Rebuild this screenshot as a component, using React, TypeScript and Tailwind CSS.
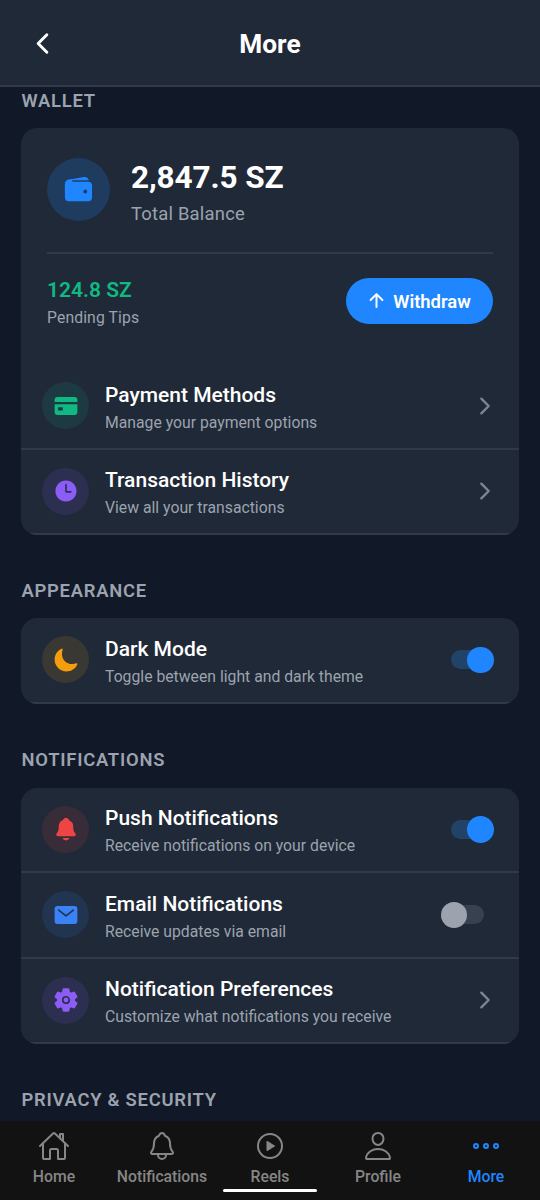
import React, { useState } from "react";
import {
    IoArrowUp,
    IoChevronBack,
    IoChevronForward,
    IoEllipsisHorizontalOutline,
    IoHomeOutline,
    IoMail,
    IoMoon,
    IoNotifications,
    IoNotificationsOutline,
    IoPersonOutline,
    IoPlayCircleOutline,
    IoSettings,
    IoTime,
    IoWallet,
} from "react-icons/io5";

const CardIcon = ({ size }: { size?: number }) => (
    <svg width={size} height={size} viewBox="0 0 512 512" fill="currentColor" aria-hidden="true">
        <path d="M88 80h336a56 56 0 0 1 56 56v40H32v-40a56 56 0 0 1 56-56z" />
        <path
            fillRule="evenodd"
            d="M32 220h448v156a56 56 0 0 1-56 56H88a56 56 0 0 1-56-56zM100 280v64h92v-64z"
        />
    </svg>
);

const SectionTitle = ({ children }: { children: React.ReactNode }) => (
    <h2 className="pl-[21.5px] text-[18.4px] leading-[22px] font-semibold tracking-[0.75px] text-[#9ca3af]">
        {children}
    </h2>
);

const Card = ({ children }: { children: React.ReactNode }) => (
    <div className="mx-[21px] overflow-hidden rounded-[16px] bg-[#1f2937]">{children}</div>
);

const Switch = ({ on, onChange }: { on: boolean; onChange: () => void }) => (
    <button
        type="button"
        role="switch"
        aria-checked={on}
        onClick={onChange}
        className={`relative mr-[4.5px] flex h-[27px] w-[53px] items-center ${on ? "justify-end" : "justify-start"}`}
    >
        <span
            className={`absolute top-[4px] h-[19px] rounded-full ${
                on ? "left-[10px] w-[39px] bg-[#204367]" : "left-[4px] w-[39px] bg-[#374151]"
            }`}
        />
        <span className={`relative size-[26.5px] rounded-full ${on ? "bg-[#2086ff]" : "bg-[#9ca3af]"}`} />
    </button>
);

type RowProps = {
    icon: React.ComponentType<{ size?: number }>;
    color: string;
    title: string;
    subtitle: string;
    children?: React.ReactNode;
};

const Row = ({ icon: Icon, color, title, subtitle, children }: RowProps) => (
    <div className="flex h-[85.5px] items-center border-b-2 border-[#303a49] px-[21px]">
        <div className={`flex size-[47px] items-center justify-center rounded-full ${color}`}>
            <Icon size={26} />
        </div>
        <div className="ml-4 flex-1 pt-[6px]">
            <div className="text-[21px] leading-[25px] font-medium text-white">{title}</div>
            <div className="mt-[3px] text-[15.75px] leading-[24px] text-[#9ca3af]">{subtitle}</div>
        </div>
        {children ?? <IoChevronForward size={26} className="text-[#7d8591]" />}
    </div>
);

const tabs = [
    { label: "Home", icon: IoHomeOutline },
    { label: "Notifications", icon: IoNotificationsOutline },
    { label: "Reels", icon: IoPlayCircleOutline },
    { label: "Profile", icon: IoPersonOutline },
    { label: "More", icon: IoEllipsisHorizontalOutline },
];

const App = () => {
    const [darkMode, setDarkMode] = useState(true);
    const [push, setPush] = useState(true);
    const [email, setEmail] = useState(false);

    return (
        <div className="flex h-[1200px] w-[540px] flex-col overflow-hidden bg-[#111827] font-['Roboto',sans-serif]">
            {/* Header */}
            <header className="flex h-[87px] shrink-0 items-center border-b-2 border-[#303a49] bg-[#1f2937] px-[26px]">
                <button type="button" aria-label="Back" className="flex w-[32px] justify-center pt-px text-white">
                    <IoChevronBack size={31} />
                </button>
                <h1 className="flex-1 pt-[4px] text-center text-[26.25px] font-bold text-white">More</h1>
                <div className="w-[32px]" />
            </header>

            {/* Settings list */}
            <main className="min-h-0 flex-1 overflow-hidden pt-[3px]">
                <SectionTitle>WALLET</SectionTitle>
                <div className="mt-[16px]">
                    <Card>
                        <div className="h-[236px] px-[26px] pt-[26.5px]">
                            <div className="flex h-[99px] items-start border-b-2 border-[#303a49]">
                                <div className="mt-[3.5px] flex size-[63px] items-center justify-center rounded-full bg-[#1f3c5f] text-[#2086ff]">
                                    <IoWallet size={31} />
                                </div>
                                <div className="ml-[21px]">
                                    <div className="mt-1 text-[31.5px] leading-[38px] font-bold tracking-[-0.1px] text-white">2,847.5 SZ</div>
                                    <div className="mt-[5px] text-[18.4px] leading-[24px] tracking-[0.22px] text-[#9ca3af]">Total Balance</div>
                                </div>
                            </div>
                            <div className="flex items-start justify-between pt-[24px]">
                                <div>
                                    <div className="text-[21px] leading-[25px] font-semibold text-[#10b981]">124.8 SZ</div>
                                    <div className="mt-[4px] text-[15.75px] leading-[22px] tracking-[0.1px] text-[#9ca3af]">Pending Tips</div>
                                </div>
                                <button
                                    type="button"
                                    className="flex h-[46.5px] w-[147px] items-center justify-center gap-[6px] rounded-full bg-[#2086ff] pr-[2px] text-[18.4px] font-semibold text-white"
                                >
                                    <IoArrowUp size={21} />
                                    <span className="pt-[2px]">Withdraw</span>
                                </button>
                            </div>
                        </div>
                        <Row
                            icon={CardIcon}
                            color="bg-[#1d3a42] text-[#10b981]"
                            title="Payment Methods"
                            subtitle="Manage your payment options"
                        />
                        <Row
                            icon={IoTime}
                            color="bg-[#2c2f50] text-[#8b5cf6]"
                            title="Transaction History"
                            subtitle="View all your transactions"
                        />
                    </Card>
                </div>

                <div className="mt-[44.5px]">
                    <SectionTitle>APPEARANCE</SectionTitle>
                </div>
                <div className="mt-[16.5px]">
                    <Card>
                        <Row
                            icon={IoMoon}
                            color="bg-[#393833] text-[#f59e0b]"
                            title="Dark Mode"
                            subtitle="Toggle between light and dark theme"
                        >
                            <Switch on={darkMode} onChange={() => setDarkMode(!darkMode)} />
                        </Row>
                    </Card>
                </div>

                <div className="mt-[45.5px]">
                    <SectionTitle>NOTIFICATIONS</SectionTitle>
                </div>
                <div className="mt-[16.5px]">
                    <Card>
                        <Row
                            icon={IoNotifications}
                            color="bg-[#392c39] text-[#ef4444]"
                            title="Push Notifications"
                            subtitle="Receive notifications on your device"
                        >
                            <Switch on={push} onChange={() => setPush(!push)} />
                        </Row>
                        <Row
                            icon={IoMail}
                            color="bg-[#213450] text-[#3b82f6]"
                            title="Email Notifications"
                            subtitle="Receive updates via email"
                        >
                            <Switch on={email} onChange={() => setEmail(!email)} />
                        </Row>
                        <Row
                            icon={IoSettings}
                            color="bg-[#2c2f50] text-[#8b5cf6]"
                            title="Notification Preferences"
                            subtitle="Customize what notifications you receive"
                        />
                    </Card>
                </div>

                <div className="mt-[44.5px]">
                    <SectionTitle>{"PRIVACY & SECURITY"}</SectionTitle>
                </div>
            </main>

            {/* Bottom tabs */}
            <nav className="relative grid h-[79px] shrink-0 grid-cols-5 bg-[#121212]">
                {tabs.map(({ label, icon: Icon }) => (
                    <button
                        key={label}
                        type="button"
                        className={`flex flex-col items-center pt-[9px] ${label === "More" ? "text-[#2086ff]" : "text-[#868686]"}`}
                    >
                        <Icon size={32} />
                        <span className="mt-[4.5px] text-[15.75px] leading-[20px] font-medium">{label}</span>
                    </button>
                ))}
                {/* Home indicator */}
                <div className="absolute bottom-[8.5px] left-[223px] h-[3px] w-[94px] rounded-full bg-white" />
            </nav>
        </div>
    );
};

export default App;
